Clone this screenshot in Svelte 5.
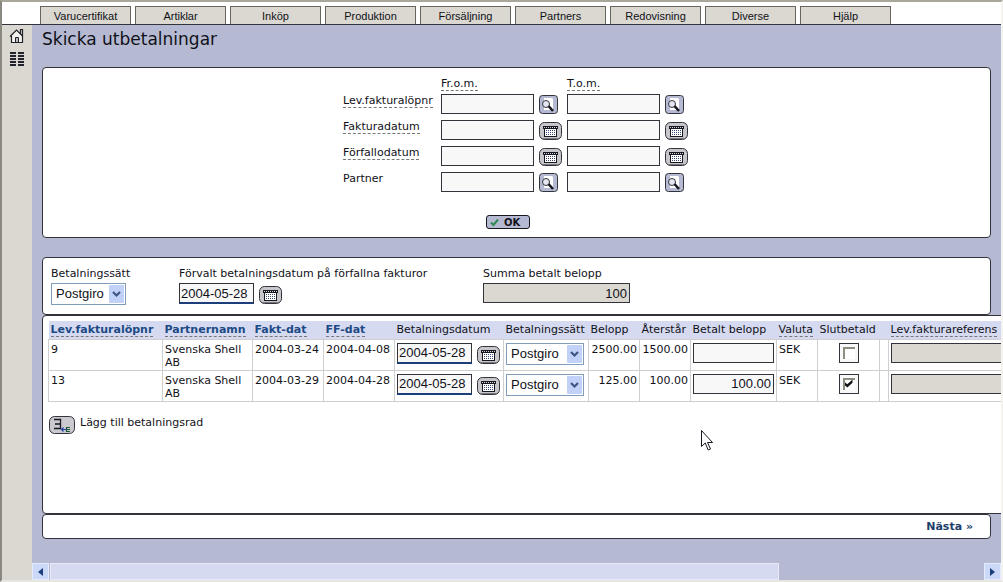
<script>
  const tabs = ['Varucertifikat', 'Artiklar', 'Inköp', 'Produktion', 'Försäljning', 'Partners', 'Redovisning', 'Diverse', 'Hjälp'];

  // ── Search filters ──
  const filters = [
    { key: 'lopnr', label: 'Lev.fakturalöpnr', kind: 'search', help: true },
    { key: 'fakturadatum', label: 'Fakturadatum', kind: 'date', help: true },
    { key: 'forfallodatum', label: 'Förfallodatum', kind: 'date', help: true },
    { key: 'partner', label: 'Partner', kind: 'search', help: false },
  ];
  let from = $state({ lopnr: '', fakturadatum: '', forfallodatum: '', partner: '' });
  let to = $state({ lopnr: '', fakturadatum: '', forfallodatum: '', partner: '' });

  // ── Payments ──
  const methods = ['Postgiro', 'Bankgiro'];
  let method = $state('Postgiro');
  let payDate = $state('2004-05-28');

  let rows = $state([
    { nr: 9, partner: 'Svenska Shell AB', invoiced: '2004-03-24', due: '2004-04-08', date: '2004-05-28', method: 'Postgiro', amount: '2500.00', left: '1500.00', paid: '', currency: 'SEK', done: false, ref: '' },
    { nr: 13, partner: 'Svenska Shell AB', invoiced: '2004-03-29', due: '2004-04-28', date: '2004-05-28', method: 'Postgiro', amount: '125.00', left: '100.00', paid: '100.00', currency: 'SEK', done: true, ref: '' },
  ]);
  let sum = $derived(rows.reduce((total, row) => total + Number(row.paid), 0));
</script>

{#snippet calendar(label)}
  <button type="button" class="icon-btn" aria-label={label}>
    <svg width="23" height="18" viewBox="0 0 23 18">
      <rect x="0.5" y="0.5" width="22" height="17" rx="5" fill="#c6c6cb" stroke="#33333c" />
      <path d="M3 16.5h17" stroke="#77777f" />
      <g shape-rendering="crispEdges">
        <path d="M5 6h13v9H5z" fill="#17171f" />
        <path d="M6 7h11v7H6z" fill="#fff" />
        <path d="M4 4h15v3H4z" fill="#17171f" />
        <path d="M5 5.5h13" stroke="#d8d8dc" stroke-dasharray="1 1" />
        <path d="M7 8.5h9M7 10.5h9M7 12.5h9" stroke="#34456f" stroke-dasharray="1 1" />
      </g>
    </svg>
  </button>
{/snippet}

{#snippet search(label)}
  <button type="button" class="icon-btn" aria-label={label}>
    <svg width="19" height="19" viewBox="0 0 19 19">
      <rect x="0.5" y="0.5" width="18" height="18" rx="3" fill="#b5bad2" stroke="#33333c" />
      <path d="M5 3h8l1 1v11H5z" fill="#fff" />
      <circle cx="7" cy="9" r="3.500" fill="#e4e6f2" stroke="#33333c" />
      <path d="M9.500 11l4.500 5" stroke="#17171f" stroke-width="2.600" />
    </svg>
  </button>
{/snippet}

{#snippet methodSelect(row, label)}
  <span class="select">
    <select bind:value={row.method} aria-label={label}>
      {#each methods as name}<option>{name}</option>{/each}
    </select>
    {@render arrow()}
  </span>
{/snippet}

{#snippet arrow()}
  <svg class="arrow" width="16" height="18" viewBox="0 0 16 18">
    <rect x="0" y="0" width="15" height="18" rx="1" fill="#c1d1f8" />
    <path d="M4 7l3.5 3.5L11 7" fill="none" stroke="#3f5685" stroke-width="2.2" />
  </svg>
{/snippet}

<div class="window">
  <nav class="tabs">
    {#each tabs as tab}
      <button type="button" class="tab">{tab}</button>
    {/each}
  </nav>

  <div class="body">
    <aside class="sidebar">
      <a href="#start" aria-label="Start">
        <svg width="16" height="16" viewBox="0 0 16 16">
          <path d="M3 8v6.500h10V8L8 2z" fill="#f4f3ee" />
          <path d="M1 8.500L7.500 2l6.500 6.500M2.500 8v6.500h11V8M11.500 5.500v-4h2v6" fill="none" stroke="#22222a" stroke-width="1.200" />
          <path d="M6.500 14V9.500h3V14" fill="#bbb" stroke="#22222a" />
        </svg>
      </a>
      <a href="#lista" aria-label="Lista">
        <svg width="14" height="14" viewBox="0 0 14 14" shape-rendering="crispEdges">
          <path d="M0 1h14M0 4h14M0 7h14M0 10h14M0 13h14" stroke="#22222a" stroke-width="2" stroke-dasharray="6 2" />
        </svg>
      </a>
    </aside>

    <main>
      <h1>Skicka utbetalningar</h1>

      <form class="panel filter" onsubmit={(e) => e.preventDefault()}>
        <div class="filter-grid">
          <span></span>
          <span><span class="help">Fr.o.m.</span></span>
          <span><span class="help">T.o.m.</span></span>
          {#each filters as f}
            <label for={f.key}><span class:help={f.help}>{f.label}</span></label>
            {#each [{ values: from, id: f.key, name: 'fr.o.m.' }, { values: to, id: f.key + '-to', name: 't.o.m.' }] as side}
              <span class="field">
                <input type="text" class="range" id={side.id} aria-label="{f.label} {side.name}" bind:value={side.values[f.key]} />
                {#if f.kind === 'date'}
                  {@render calendar(`Välj ${f.label} ${side.name}`)}
                {:else}
                  {@render search(`Sök ${f.label} ${side.name}`)}
                {/if}
              </span>
            {/each}
          {/each}
        </div>
        <button type="submit" class="ok">
          <svg width="9" height="9" viewBox="0 0 9 9"><path d="M1 4.500L3.500 7L8 1.500" fill="none" stroke="#2f8a51" stroke-width="2" /></svg>
          OK
        </button>
      </form>

      <section class="panel defaults">
        <div class="default">
          <label for="method">Betalningssätt</label>
          <span class="select">
            <select id="method" bind:value={method}>
              {#each methods as name}<option>{name}</option>{/each}
            </select>
            {@render arrow()}
          </span>
        </div>
        <div class="default">
          <label for="pay-date">Förvalt betalningsdatum på förfallna fakturor</label>
          <span class="field">
            <input type="text" class="date" id="pay-date" bind:value={payDate} />
            {@render calendar('Välj betalningsdatum')}
          </span>
        </div>
        <div class="default">
          <label for="sum">Summa betalt belopp</label>
          <input type="text" class="sum" id="sum" value={sum} readonly />
        </div>
      </section>

      <section class="panel payments">
        <table>
          <colgroup>
            <col class="c-nr" /><col class="c-partner" /><col class="c-day" /><col class="c-day" />
            <col class="c-date" /><col class="c-method" /><col class="c-amount" /><col class="c-amount" />
            <col class="c-paid" /><col class="c-currency" /><col class="c-done" /><col class="c-gap" /><col class="c-ref" />
          </colgroup>
          <thead>
            <tr>
              <th><a class="help" href="#nr">Lev.fakturalöpnr</a></th>
              <th><a class="help" href="#partner">Partnernamn</a></th>
              <th><a class="help" href="#fakt">Fakt-dat</a></th>
              <th><a class="help" href="#ff">FF-dat</a></th>
              <th>Betalningsdatum</th>
              <th>Betalningssätt</th>
              <th>Belopp</th>
              <th>Återstår</th>
              <th>Betalt belopp</th>
              <th><span class="help">Valuta</span></th>
              <th>Slutbetald</th>
              <th></th>
              <th><span class="help">Lev.fakturareferens</span></th>
            </tr>
          </thead>
          <tbody>
            {#each rows as row}
              <tr>
                <td>{row.nr}</td>
                <td>{row.partner}</td>
                <td>{row.invoiced}</td>
                <td>{row.due}</td>
                <td>
                  <span class="field">
                    <input type="text" class="date" aria-label="Betalningsdatum {row.nr}" bind:value={row.date} />
                    {@render calendar(`Välj betalningsdatum ${row.nr}`)}
                  </span>
                </td>
                <td>{@render methodSelect(row, `Betalningssätt ${row.nr}`)}</td>
                <td class="num">{row.amount}</td>
                <td class="num">{row.left}</td>
                <td><input type="text" class="paid" aria-label="Betalt belopp {row.nr}" bind:value={row.paid} /></td>
                <td>{row.currency}</td>
                <td class="done"><input type="checkbox" aria-label="Slutbetald {row.nr}" bind:checked={row.done} /></td>
                <td></td>
                <td><input type="text" class="ref" aria-label="Lev.fakturareferens {row.nr}" value={row.ref} readonly /></td>
              </tr>
            {/each}
          </tbody>
        </table>
        <button type="button" class="add">
          <svg width="26" height="18" viewBox="0 0 26 18">
            <rect x="0.5" y="0.5" width="25" height="17" rx="5" fill="#c9c9cf" stroke="#33333c" />
            <path d="M5 3.500h6.500v9H5M6 8h5" fill="none" stroke="#17171f" stroke-width="1.300" />
            <path d="M12 13.500h5M14.500 11.500l-2 2l2 2" fill="none" stroke="#2b3fa8" stroke-width="1.200" />
            <path d="M21 11.500h-3.500v4H21M18 13.500h3" fill="none" stroke="#1d5a3a" stroke-width="1.200" />
          </svg>
          Lägg till betalningsrad
        </button>
      </section>

      <footer class="panel next">
        <a href="#nasta">Nästa »</a>
      </footer>

      <div class="scrollbar">
        <button type="button" class="scroll-btn" aria-label="Rulla åt vänster">
          <svg width="5" height="8" viewBox="0 0 5 8"><path d="M5 0v8L0 4z" fill="#1c3f7c" /></svg>
        </button>
        <div class="track"><div class="thumb"></div></div>
        <button type="button" class="scroll-btn" aria-label="Rulla åt höger">
          <svg width="5" height="8" viewBox="0 0 5 8"><path d="M0 0v8l5-4z" fill="#1c3f7c" /></svg>
        </button>
      </div>
    </main>
  </div>

  <svg class="pointer" width="12" height="21" viewBox="0 0 12 21">
    <path d="M.5.5v16l3.700-3.500l3 7l2.300-1l-3-6.500h5z" fill="#fff" stroke="#17171f" />
  </svg>
</div>

<style>
  :global(body) {
    margin: 0;
    background: #fff;
    color: #111118;
    font: 11px/13px Verdana, 'DejaVu Sans', sans-serif;
  }
  * { box-sizing: border-box; }
  button, input, select { margin: 0; color: inherit; font: inherit; }

  .window {
    position: relative;
    display: flex;
    flex-direction: column;
    min-height: 100vh;
    overflow: hidden;
    border: 2px solid;
    border-color: #a9a799 #f4f3f0 #e6e5e0 #8a8980;
  }

  /* ── Tabs ── */
  .tabs {
    display: flex;
    gap: 4px;
    padding: 4px 0 0 38px;
    border-bottom: 1px solid #33333c;
  }
  .tab {
    width: 91px;
    height: 18px;
    padding: 2px 0 0;
    border: 1px solid #66665f;
    border-bottom: 0;
    background: #dad8d0;
    font: 11px/13px 'Liberation Sans', Arial, sans-serif;
  }

  .body { display: flex; flex: 1; }
  .sidebar {
    display: flex;
    flex-direction: column;
    align-items: center;
    gap: 8px;
    width: 30px;
    padding-top: 3px;
    background: #dad8d0;
  }
  .sidebar svg { display: block; }
  main {
    display: flex;
    flex: 1;
    flex-direction: column;
    min-width: 0;
    overflow: hidden;
    background: #b5bad2;
  }
  h1 {
    margin: 4px 10px 18px;
    font-size: 17px;
    font-weight: 400;
    line-height: 20px;
  }

  .panel {
    margin: 0 10px;
    border: 1px solid #33333c;
    border-radius: 4px;
    background: #fff;
  }
  .help { border-bottom: 1px dashed #777; }

  /* ── Fields ── */
  .field { display: flex; align-items: flex-end; gap: 5px; }
  input[type='text'] {
    height: 20px;
    padding: 0 2px;
    border: 1px solid #33333c;
    border-radius: 0;
    background: #f8f8f8;
    font: 13px/16px 'Liberation Sans', Arial, sans-serif;
  }
  input[type='text'][readonly] { background: #dad8d0; }
  input.range { width: 93px; }
  input[type='text'].date { width: 75px; height: 21px; padding: 0 1px; border-bottom: 2px solid #1c3f7c; }
  input.sum { width: 147px; text-align: right; }
  input.paid { width: 81px; text-align: right; }
  input.ref { width: 160px; }

  .icon-btn { flex: none; padding: 0; border: 0; background: none; }
  .icon-btn svg { display: block; }

  .select { display: inline-grid; align-items: center; }
  .select > :global(*) { grid-area: 1 / 1; }
  select {
    width: 75px;
    height: 22px;
    padding: 0 4px;
    border: 1px solid #7f9db9;
    border-radius: 0;
    background: #fff;
    appearance: none;
    font: 13px/16px 'Liberation Sans', Arial, sans-serif;
  }
  .arrow { justify-self: end; margin-right: 1px; pointer-events: none; }

  input[type='checkbox'] {
    display: inline-grid;
    place-items: center;
    width: 20px;
    height: 20px;
    border: 1px solid #33333c;
    background: #f8f8f8;
    appearance: none;
  }
  input[type='checkbox']::before {
    content: '';
    grid-area: 1 / 1;
    width: 12px;
    height: 12px;
    box-sizing: border-box;
    border: solid #8f8c82;
    border-width: 2px 0 0 2px;
    background: #fff;
  }
  input[type='checkbox']:checked::after {
    content: '';
    grid-area: 1 / 1;
    width: 8px;
    height: 8px;
    background: #111118;
    clip-path: polygon(0 30%, 35% 60%, 100% 0, 100% 40%, 35% 100%, 0 70%);
  }

  /* ── Filter ── */
  .filter {
    display: flex;
    flex-direction: column;
    align-items: center;
    padding: 9px 2px 8px 0;
  }
  .filter-grid {
    display: grid;
    grid-template-columns: 93px 121px 121px;
    gap: 6px 5px;
    align-items: start;
    grid-template-rows: 11px;
  }
  .filter-grid label { white-space: nowrap; }
  .filter-grid .field { height: 20px; }
  .ok {
    display: flex;
    align-items: center;
    gap: 5px;
    width: 44px;
    height: 14px;
    margin: 23px 15px 0 0;
    padding: 0 3px;
    border: 1px solid #17171f;
    border-radius: 3px;
    background: #b5bad2;
    font-size: 10px;
    font-weight: 700;
  }

  /* ── Defaults ── */
  .defaults {
    display: grid;
    grid-template-columns: 128px 304px auto;
    margin-top: 19px;
    padding: 9px 8px;
  }
  .default { display: flex; flex-direction: column; align-items: flex-start; gap: 3px; }

  /* ── Payments ── */
  .payments {
    width: max-content;
    min-height: 199px;
    padding: 5px;
  }
  table { width: 1005px; border-collapse: collapse; table-layout: fixed; }
  .c-nr { width: 114px; }
  .c-partner { width: 90px; }
  .c-day { width: 71px; }
  .c-date { width: 109px; }
  .c-method { width: 85px; }
  .c-amount { width: 51px; }
  .c-paid { width: 86px; }
  .c-currency { width: 41px; }
  .c-done { width: 62px; }
  .c-gap { width: 9px; }
  th {
    height: 18px;
    padding: 0 2px;
    background: #d5daf0;
    font-weight: 400;
    text-align: left;
    white-space: nowrap;
  }
  th a { color: #1d4a85; font-weight: 700; text-decoration: none; }
  td {
    height: 31px;
    padding: 3px 2px 1px;
    border: 1px solid #cfcfcf;
    vertical-align: top;
  }
  td input, td .select { vertical-align: top; }
  td .select, td select { width: 78px; }
  .num { text-align: right; }
  .done { text-align: center; }
  .add {
    display: flex;
    gap: 5px;
    margin: 14px 0 0 1px;
    padding: 0;
    border: 0;
    background: none;
  }

  .next { padding: 5px 17px; text-align: right; }
  .next a { color: #1c3f6c; font-weight: 700; text-decoration: none; }

  /* ── Scrollbar ── */
  .scrollbar { display: flex; height: 17px; margin-top: auto; }
  .scroll-btn {
    display: grid;
    place-items: center;
    width: 17px;
    padding: 0;
    border: 1px solid #e6ebfb;
    background: #cbd8f7;
  }
  .track { flex: 1; padding-left: 1px; }
  .thumb { width: 78%; height: 100%; border: 1px solid #e6e9f7; background: #d5daf0; }

  .pointer { position: absolute; left: 699px; top: 428px; pointer-events: none; }
</style>
